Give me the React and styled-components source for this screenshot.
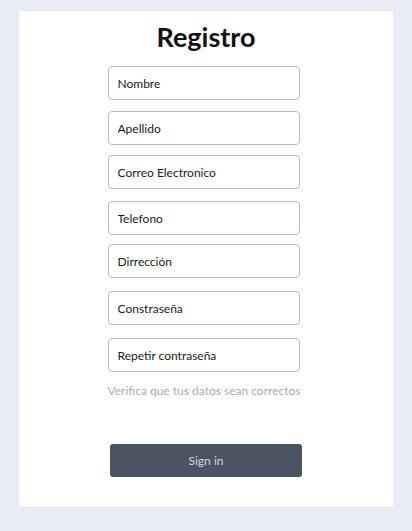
import React from "react";
import styled, { createGlobalStyle } from "styled-components";

const Global = createGlobalStyle`
  html, body { margin: 0; padding: 0; background: #e9ecf5; }
  body { font-family: Lato, "Noto Sans", sans-serif; }
  * { box-sizing: border-box; }
`;

const Page = styled.div`
  min-height: 531px;
  padding: 11px 19px 24px 19px;
`;

const Card = styled.form`
  background: #ffffff;
  height: 496px;
  display: flex;
  flex-direction: column;
  align-items: center;
  padding-top: 8px;
`;

const Title = styled.h1`
  margin: 0;
  font-family: Lato, sans-serif;
  font-weight: 700;
  font-size: 27px;
  line-height: 36px;
  color: #111111;
`;

const Field = styled.input`
  display: block;
  width: 192px;
  height: 34px;
  margin: ${(p) => p.$top}px 0 0 -5px;
  padding: 0 9px;
  border: 1px solid #b7bac2;
  border-radius: 4px;
  font-family: Lato, sans-serif;
  font-size: 12px;
  color: #1a1a1a;
  background: #fff;
  outline: none;
  &::placeholder { color: #1a1a1a; opacity: 1; }
`;

const Hint = styled.p`
  margin: 12px 0 0 -4px;
  font-family: Lato, sans-serif;
  font-size: 12px;
  line-height: 14px;
  color: #a3adbf;
`;

const Button = styled.button`
  margin-top: 46px;
  width: 192px;
  height: 33px;
  border: none;
  border-radius: 3px;
  background: #4a5462;
  color: #d4d8de;
  font-family: Lato, sans-serif;
  font-size: 12px;
`;

const fields = [
  ["Nombre", 11],
  ["Apellido", 11],
  ["Correo Electronico", 10],
  ["Telefono", 12],
  ["Dirrección", 9],
  ["Constraseña", 13],
  ["Repetir contraseña", 13],
];

export default function App() {
  return (
    <>
      <Global />
      <Page>
        <Card onSubmit={(e) => e.preventDefault()}>
          <Title>Registro</Title>
          {fields.map(([ph, top]) => (
            <Field key={ph} placeholder={ph} $top={top} />
          ))}
          <Hint>Verifica que tus datos sean correctos</Hint>
          <Button type="submit">Sign in</Button>
        </Card>
      </Page>
    </>
  );
}
